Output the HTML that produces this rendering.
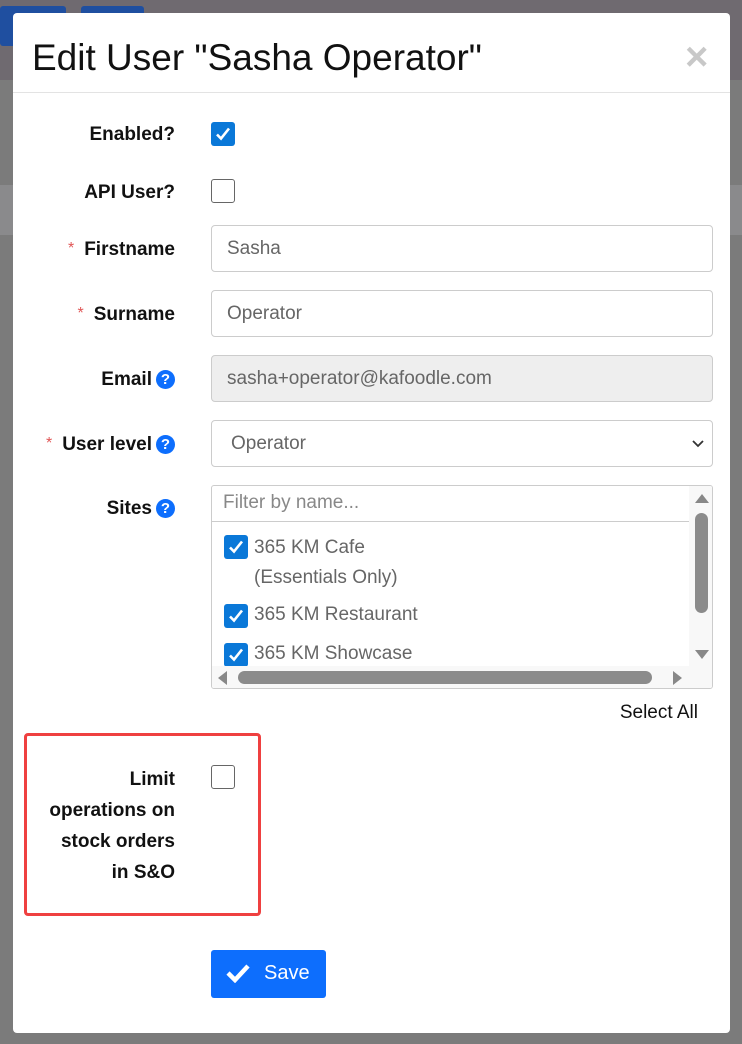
<!DOCTYPE html>
<html><head><style>
*{box-sizing:border-box;margin:0;padding:0}
body{width:742px;height:1044px;background:#7b7b7b;position:relative;overflow:hidden;font-family:"Liberation Sans",sans-serif}
.bg{position:absolute}
.modal{position:absolute;left:13px;top:13px;width:717px;height:1020px;background:#fff;border-radius:4px}
.a{position:absolute}
.lbl{position:absolute;right:555px;font-weight:bold;font-size:19px;color:#111;text-align:right;white-space:nowrap}
.req{color:#e05555;font-weight:normal;font-size:16px;margin-right:10px;position:relative;top:-2px}
.q{display:inline-block;width:19px;height:19px;border-radius:50%;background:#0d6efd;color:#fff;font-size:15px;line-height:19px;text-align:center;margin-left:4px;vertical-align:1px}
.inp{position:absolute;left:198px;width:502px;height:47px;border:1px solid #ccc;border-radius:4px;font-size:19px;color:#666;padding:12px 15px}
.cb{position:absolute;width:24px;height:24px;border-radius:3px}
.on{background:#0a78d8}
.off{border:1.5px solid #666;background:#fff}
.cb svg{position:absolute;left:3px;top:3px}
</style></head><body>
<div class="bg" style="left:0;top:0;width:742px;height:80px;background:#6f6a70"></div>
<div class="bg" style="left:0;top:6px;width:66px;height:40px;background:#1f4fa0;border-radius:3px"></div>
<div class="bg" style="left:81px;top:6px;width:63px;height:40px;background:#1f4fa0;border-radius:3px"></div>
<div class="bg" style="left:0;top:185px;width:742px;height:50px;background:#8a8a8c"></div>
<div class="modal">
  <div class="a" style="left:19px;top:24px;font-size:37px;color:#111">Edit User "Sasha Operator"</div>
  <div class="a" style="left:672px;top:22px;font-size:40px;color:#c8c8c8;font-weight:bold">×</div>
  <div class="a" style="left:0;top:79px;width:717px;height:1px;background:#e3e3e3"></div>

  <div class="lbl" style="top:111px">Enabled?</div>
  <div class="cb on" style="left:198px;top:109px"><svg width="18" height="18" viewBox="0 0 18 18"><path d="M3 9.5l4 4 8-10" stroke="#fff" stroke-width="2.6" fill="none"/></svg></div>
  <div class="lbl" style="top:169px">API User?</div>
  <div class="cb off" style="left:198px;top:166px"></div>

  <div class="lbl" style="top:226px"><span class="req">*</span>Firstname</div>
  <div class="inp" style="top:212px">Sasha</div>
  <div class="lbl" style="top:291px"><span class="req">*</span>Surname</div>
  <div class="inp" style="top:277px">Operator</div>
  <div class="lbl" style="top:356px">Email<span class="q">?</span></div>
  <div class="inp" style="top:342px;background:#eee">sasha+operator@kafoodle.com</div>
  <div class="lbl" style="top:421px"><span class="req">*</span>User level<span class="q">?</span></div>
  <div class="inp" style="top:407px;padding-left:19px">Operator<svg class="a" style="right:8px;top:19px" width="12" height="8" viewBox="0 0 12 8"><path d="M1 1l5 5 5-5" stroke="#333" stroke-width="1.8" fill="none"/></svg></div>

  <div class="lbl" style="top:485px">Sites<span class="q">?</span></div>
  <div class="a" style="left:198px;top:472px;width:502px;height:204px;border:1px solid #ccc;border-radius:3px;overflow:hidden">
    <div class="a" style="left:0;top:0;width:477px;height:36px;border-bottom:1px solid #ccc;font-size:19px;color:#888;padding:6px 11px">Filter by name...</div>
    <div class="cb on" style="left:12px;top:49px"><svg width="18" height="18" viewBox="0 0 18 18"><path d="M3 9.5l4 4 8-10" stroke="#fff" stroke-width="2.6" fill="none"/></svg></div>
    <div class="a" style="left:42px;top:47px;font-size:19px;color:#666;line-height:30px">365 KM Cafe<br>(Essentials Only)</div>
    <div class="cb on" style="left:12px;top:118px"><svg width="18" height="18" viewBox="0 0 18 18"><path d="M3 9.5l4 4 8-10" stroke="#fff" stroke-width="2.6" fill="none"/></svg></div>
    <div class="a" style="left:42px;top:118px;font-size:19px;color:#666">365 KM Restaurant</div>
    <div class="cb on" style="left:12px;top:157px"><svg width="18" height="18" viewBox="0 0 18 18"><path d="M3 9.5l4 4 8-10" stroke="#fff" stroke-width="2.6" fill="none"/></svg></div>
    <div class="a" style="left:42px;top:157px;font-size:19px;color:#666">365 KM Showcase</div>
    <div class="a" style="left:477px;top:0;width:24px;height:180px;background:#f8f8f8"></div>
    <div class="a" style="left:483px;top:8px;width:0;height:0;border-left:7px solid transparent;border-right:7px solid transparent;border-bottom:9px solid #888"></div>
    <div class="a" style="left:483px;top:27px;width:13px;height:100px;border-radius:7px;background:#8b8b8b"></div>
    <div class="a" style="left:483px;top:164px;width:0;height:0;border-left:7px solid transparent;border-right:7px solid transparent;border-top:9px solid #888"></div>
    <div class="a" style="left:0;top:180px;width:502px;height:24px;background:#f8f8f8"></div>
    <div class="a" style="left:6px;top:185px;width:0;height:0;border-top:7px solid transparent;border-bottom:7px solid transparent;border-right:9px solid #888"></div>
    <div class="a" style="left:26px;top:185px;width:414px;height:13px;border-radius:7px;background:#8b8b8b"></div>
    <div class="a" style="left:461px;top:185px;width:0;height:0;border-top:7px solid transparent;border-bottom:7px solid transparent;border-left:9px solid #888"></div>
  </div>
  <div class="a" style="left:597px;top:689px;font-size:19px;color:#111;width:88px;text-align:right">Select All</div>

  <div class="a" style="left:11px;top:720px;width:237px;height:183px;border:3px solid #ef4040;border-radius:4px"></div>
  <div class="lbl" style="top:751px;line-height:31px">Limit<br>operations on<br>stock orders<br>in S&amp;O</div>
  <div class="cb off" style="left:198px;top:752px"></div>

  <div class="a" style="left:198px;top:937px;width:115px;height:48px;background:#0d6efd;border-radius:3px;color:#fff;font-size:20px">
    <svg class="a" style="left:15px;top:13px" width="24" height="20" viewBox="0 0 24 20"><path d="M2 10l7 7L22 3" stroke="#fff" stroke-width="4.5" fill="none"/></svg>
    <span class="a" style="left:53px;top:12px">Save</span>
  </div>
</div>
</body></html>
